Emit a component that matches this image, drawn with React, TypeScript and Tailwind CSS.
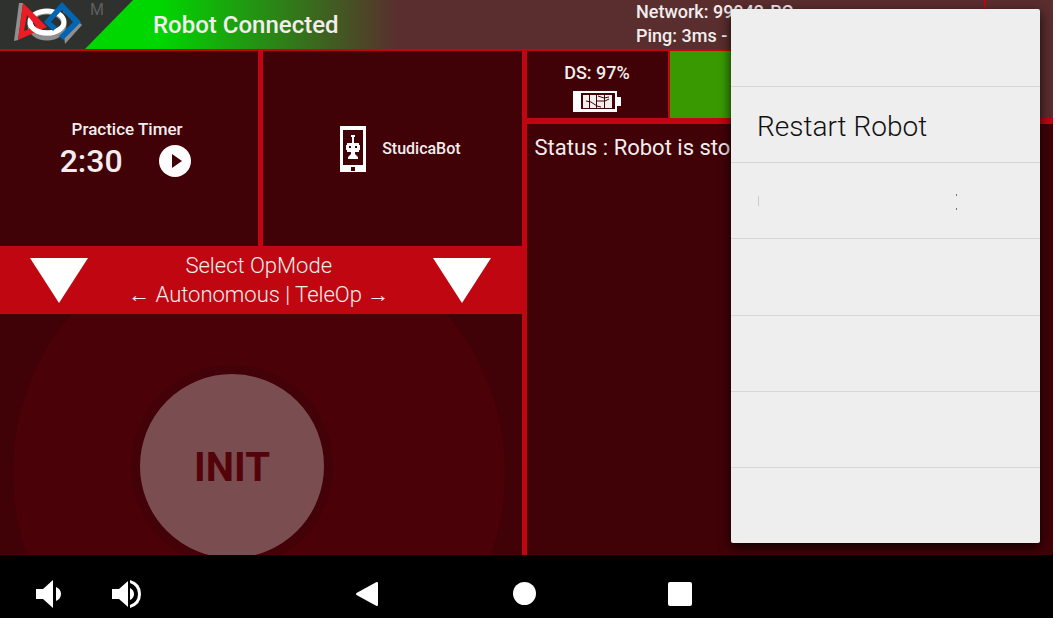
import { useState } from 'react'

const menuItems = ['', 'Restart Robot', 'marks', '', '', '', '']

function FirstLogo() {
  return (
    <svg width="68" height="42" viewBox="0 0 68 42" className="shrink-0" aria-hidden="true">
      <path fill="#8f8f8f" d="M5 1h4l-2 15-3 22-4 1z" />
      <ellipse cx="33" cy="23" rx="17" ry="13" fill="none" stroke="#8f8f8f" strokeWidth="5" />
      <ellipse cx="33" cy="20" rx="17" ry="11" fill="none" stroke="#fff" strokeWidth="5" />
      <path fill="#ed1c24" fillRule="evenodd" d="M9 1l24 24L4 38zM13 13l-3 16 12-5z" />
      <path fill="none" stroke="#fff" strokeWidth="5" d="M16 21q2 9 17 10 9 0 14-5" />
      <path fill="#8f8f8f" d="M49 10l4 3 9 9-12 12 1 8 17-19-18-18z" />
      <path fill="#0066b3" fillRule="evenodd" d="M48 0l19 20-18 18-4-4 14-14-11-12-11 12 6 5-4 4-9-9z" />
    </svg>
  )
}

function Battery() {
  return (
    <svg width="48" height="21" viewBox="0 0 48 21" aria-hidden="true">
      <path fill="#fff" fillRule="evenodd" d="M0 0h44v6h4v9h-4v6H0zM8 2v16h34V2z" />
      <path fill="#f3eded" d="M10 4h29v13H10z" />
      <path fill="none" stroke="#400207" d="M16.500 4v13M23.500 4v13M31.500 4v13M13 10l5 1 6 4 4 1M25 5l6 2 5-1M24 10h8l4-2" />
    </svg>
  )
}

function RobotPhone() {
  return (
    <svg width="26" height="46" viewBox="0 0 26 46" className="shrink-0" aria-hidden="true">
      <path fill="#fff" fillRule="evenodd" d="M0 0h26v46H0zM3 4v35h20V4zM11 41v4h4v-4z" />
      <path fill="#fff" d="M12 9h2v8h-2zM11 9h4v2h-4zM7 17h12v2h1v5h-1v2h-4v2l3 3v2H8v-2l3-3v-2H7v-2H6v-5h1z" />
      <path fill="#400207" d="M9 20h2v2H9zM15 20h2v2h-2z" />
    </svg>
  )
}

function DownArrow() {
  return (
    <svg width="60" height="45" viewBox="0 0 60 45" aria-hidden="true">
      <path fill="#fff" d="M1 0h58L30 45z" />
    </svg>
  )
}

function TopBar() {
  return (
    <header className="flex h-[51px] border-b-2 border-[#c00610] bg-[#5a2d2e]">
      <div className="relative flex h-full w-[400px] shrink-0 items-center bg-linear-to-r/srgb from-[#00d600] from-40% to-[#5a2d2e]">
        <svg width="134" height="49" viewBox="0 0 134 49" className="absolute left-0 top-0" aria-hidden="true">
          <path fill="#2f312f" d="M0 0h133L85 49H0z" />
        </svg>
        <div className="relative flex w-[153px] items-start gap-2 self-start pl-[14px] pt-[2px]">
          <FirstLogo />
          <span className="text-base/4 text-[#5f5f5f]">M</span>
        </div>
        <h1 className="relative text-2xl font-medium">Robot Connected</h1>
      </div>
      <div className="ml-[236px] h-[46px] self-start overflow-visible whitespace-nowrap text-lg/6 font-medium">
        <p>Network: 99942-RC</p>
        <p>Ping: 3ms -</p>
      </div>
    </header>
  )
}

function OptionsMenu() {
  return (
    <ul className="absolute bottom-[75px] right-[13px] top-[9px] flex w-[309px] flex-col rounded-xs bg-[#eee] pt-[2px] text-black shadow-[0_4px_12px_rgba(0,0,0,0.8)]">
      {menuItems.map((item, i) => (
        <li key={i} className="flex-1 border-b border-[#d6d6d6] last:border-b-0">
          <button className="flex h-full w-full items-center px-[26px] pt-1 text-left text-[28px] font-light text-[#111]">
            {item === 'marks' ? (
              <svg width="204" height="20" viewBox="0 0 204 20" aria-hidden="true">
                <path stroke="#ccc" d="M1.500 3v10" />
                <path stroke="#777" d="M199.500 1v2M199.500 15v2" />
              </svg>
            ) : item}
          </button>
        </li>
      ))}
    </ul>
  )
}

function NavBar() {
  return (
    <nav className="relative flex h-[63px] shrink-0 items-center bg-black pt-[14px]">
      <button aria-label="Volume down" className="ml-9">
        <svg width="26" height="28" viewBox="0 0 26 28"><path fill="#fff" d="M0 9h7l10-9v28l-10-9H0zM20 7q5 2 5 7t-5 7z" /></svg>
      </button>
      <button aria-label="Volume up" className="ml-[50px]">
        <svg width="30" height="28" viewBox="0 0 30 28"><path fill="#fff" d="M0 9h7l9-8v26l-9-8H0zM18 8q4 2 4 6t-4 6zM18 0q11 3 11 14T18 28v-3q8-3 8-11T18 3z" /></svg>
      </button>
      <button aria-label="Back" className="ml-[213px]">
        <svg width="24" height="26" viewBox="0 0 24 26"><path fill="#fff" stroke="#fff" strokeWidth="2" strokeLinejoin="round" d="M2 13L22 2v22z" /></svg>
      </button>
      <button aria-label="Home" className="ml-[134px] size-[23px] rounded-full bg-white" />
      <button aria-label="Recent apps" className="ml-[132px] size-6 rounded-xs bg-white" />
    </nav>
  )
}

export default function App() {
  const [running, setRunning] = useState(false)

  return (
    <div className="min-h-screen bg-white pr-[3px] font-['Roboto',sans-serif] text-[#f3eded]">
      <main className="relative flex min-h-screen flex-col bg-[#400207]">
        <TopBar />
        <div className="flex flex-1">
          <section className="flex w-1/2 flex-col border-r-[5px] border-[#c00610]">
            <div className="grid h-[195px] grid-cols-2 gap-[5px] bg-[#c00610]">
              <div className="flex flex-col items-center justify-center bg-[#400207] pr-1">
                <p className="text-[17px]/5 font-medium">Practice Timer</p>
                <div className="flex items-center gap-9 pr-1 pt-1">
                  <span className="text-[32px]/9 font-medium">2:30</span>
                  <button aria-label="Start timer" onClick={() => setRunning(!running)}>
                    <svg width="32" height="32" viewBox="0 0 32 32"><circle cx="16" cy="16" r="16" fill="#fff" /><path fill="#400207" d="M13 9l10 7-10 7z" /></svg>
                  </button>
                </div>
              </div>
              <div className="flex items-center justify-center gap-4 bg-[#400207] pl-4">
                <RobotPhone />
                <span className="text-base font-medium">StudicaBot</span>
              </div>
            </div>
            <div className="flex h-[68px] items-center justify-between bg-[#c00610] px-[29px]">
              <button aria-label="Autonomous op modes"><DownArrow /></button>
              <div className="pr-1 text-center text-[22px]/[29px] font-light">
                <p>Select OpMode</p>
                <p>← Autonomous | TeleOp →</p>
              </div>
              <button aria-label="TeleOp op modes"><DownArrow /></button>
            </div>
            <div className="relative flex-1 overflow-hidden">
              <div className="absolute left-[13px] top-[-87px] size-[492px] rounded-full bg-[#4a0107]" />
              <button className="absolute left-[131px] top-[51px] size-[202px] rounded-full border-[9px] border-[#430207] bg-[#7a4e50] pt-1 text-[40px] font-bold text-[#54030b]">
                INIT
              </button>
            </div>
          </section>
          <section className="flex flex-1 flex-col">
            <div className="flex h-[73px] border-b-[6px] border-[#c00610]">
              <div className="flex w-[143px] flex-col items-center gap-2 border-r-2 border-[#c00610] pt-3">
                <p className="text-lg/5 font-medium">DS: 97%</p>
                <Battery />
              </div>
              <div className="flex-1 bg-[#389a00]" />
            </div>
            <p className="p-2 text-[22px]/8 font-normal">Status : Robot is stopped</p>
          </section>
        </div>
        <div className="absolute right-0 top-0 h-[118px] w-[69px] border-l-2 border-[#c00610] bg-[#5a2d2e]" />
        <NavBar />
        <OptionsMenu />
      </main>
    </div>
  )
}
